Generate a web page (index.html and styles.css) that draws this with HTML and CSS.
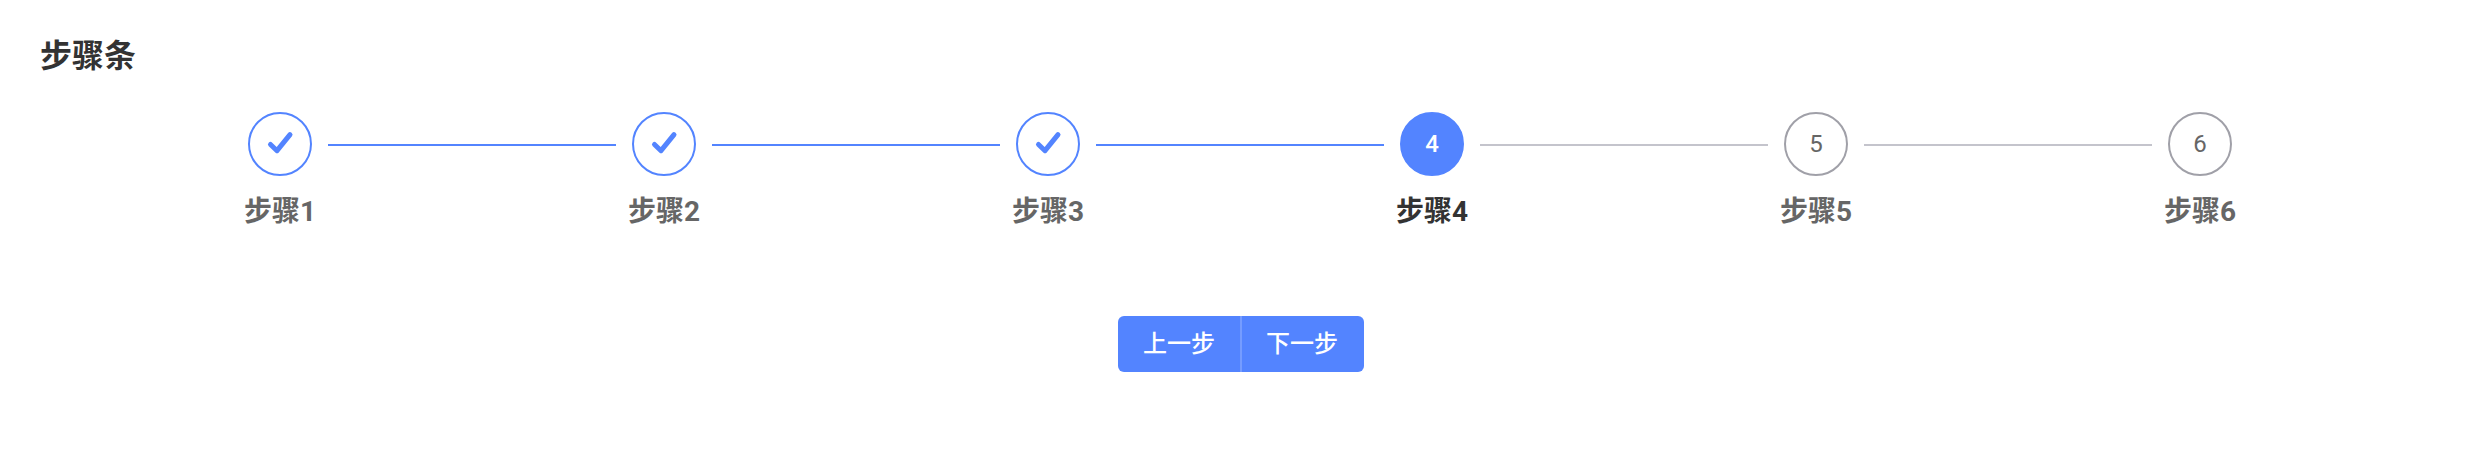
FILE: index.html
```html
<!DOCTYPE html>
<html lang="zh-CN">
<head>
<meta charset="utf-8">
<title>步骤条</title>
<link rel="stylesheet" href="styles.css">
</head>
<body>
<h1 class="title">步骤条</h1>
<ol class="steps">
<li class="step done"><div class="track"><span class="dot"><svg class="check" viewBox="0 0 28 28"><path d="M4.500 14.500L11 20.700L24 4.700"/></svg></span></div><span class="label">步骤1</span></li>
<li class="step done"><div class="track"><span class="dot"><svg class="check" viewBox="0 0 28 28"><path d="M4.500 14.500L11 20.700L24 4.700"/></svg></span></div><span class="label">步骤2</span></li>
<li class="step done"><div class="track"><span class="dot"><svg class="check" viewBox="0 0 28 28"><path d="M4.500 14.500L11 20.700L24 4.700"/></svg></span></div><span class="label">步骤3</span></li>
<li class="step current"><div class="track"><span class="dot">4</span></div><span class="label">步骤4</span></li>
<li class="step"><div class="track"><span class="dot">5</span></div><span class="label">步骤5</span></li>
<li class="step"><div class="track"><span class="dot">6</span></div><span class="label">步骤6</span></li>
</ol>
<div class="actions"><button class="btn">上一步</button><button class="btn">下一步</button></div>
</body>
</html>
```
FILE: styles.css
```css
* { box-sizing: border-box; }
body { margin: 0; padding: 32px 40px; background: #fff; color: #333; font-family: Roboto, "Noto Sans CJK SC", sans-serif; }
.title { margin: 0; padding-top: 2px; font-size: 32px; line-height: 44px; font-weight: 700; }
.steps { display: flex; list-style: none; margin: 34px 48px 0; padding: 0; }
.step { width: 384px; display: flex; flex-direction: column; align-items: center; }
.track { display: flex; align-items: center; width: 100%; gap: 16px; }
.track::before, .track::after { content: ""; flex: 1; height: 2px; margin-top: 2px; background: #c4c4cc; }
.step:first-child .track::before, .step:last-child .track::after { visibility: hidden; }
.dot { display: flex; align-items: center; justify-content: center; width: 64px; height: 64px; border: 2px solid #a0a0a8; border-radius: 50%; font-size: 24px; color: #666; }
.done .dot { border-color: #5384ff; }
.done .track::before, .done .track::after, .current .track::before { background: #5384ff; }
.current .dot { background: #5384ff; border-color: #5384ff; color: #fff; font-weight: 500; }
.check { width: 28px; height: 28px; fill: none; stroke: #5384ff; stroke-width: 5; stroke-linecap: round; stroke-linejoin: round; }
.label { margin-top: 16px; font-size: 28px; line-height: 40px; font-weight: 700; color: #666; }
.current .label { color: #333; }
.actions { display: flex; justify-content: center; margin-top: 84px; padding-left: 2px; }
.btn { width: 122px; height: 56px; border: 0; padding: 0 0 5px; background: #5384ff; color: #fff; font: 500 24px Roboto, "Noto Sans CJK SC", sans-serif; }
.btn:first-child { border-radius: 6px 0 0 6px; }
.btn:last-child { width: 124px; border-radius: 0 6px 6px 0; box-shadow: inset 2px 0 #759cff; }
```
